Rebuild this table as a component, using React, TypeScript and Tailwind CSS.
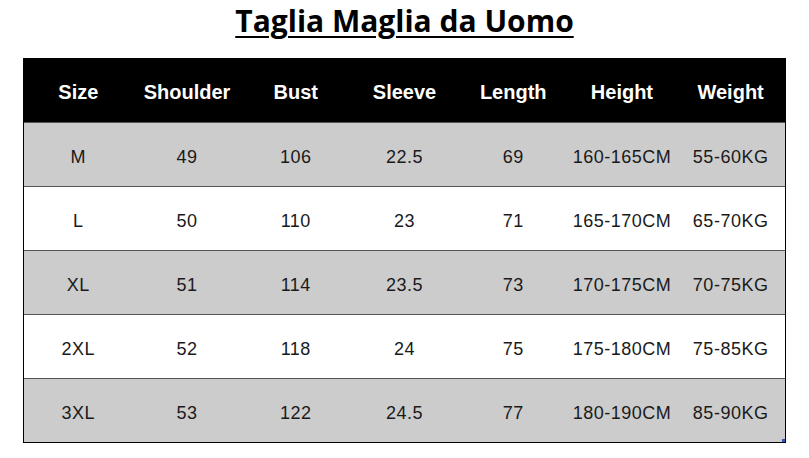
import React from "react";

const headers = ["Size", "Shoulder", "Bust", "Sleeve", "Length", "Height", "Weight"];
const rows = [
  ["M", "49", "106", "22.5", "69", "160-165CM", "55-60KG"],
  ["L", "50", "110", "23", "71", "165-170CM", "65-70KG"],
  ["XL", "51", "114", "23.5", "73", "170-175CM", "70-75KG"],
  ["2XL", "52", "118", "24", "75", "175-180CM", "75-85KG"],
  ["3XL", "53", "122", "24.5", "77", "180-190CM", "85-90KG"],
];

export default function App() {
  return (
    <div className="w-[809px] h-[458px] bg-white overflow-hidden">
      <div className="h-[58px] flex justify-center">
        <h1 className="mt-[2px] text-[30px] leading-[38px] font-bold text-black underline underline-offset-[4px] decoration-[2px] [font-family:'Open_Sans',sans-serif]">
          Taglia Maglia da Uomo
        </h1>
      </div>
      <div className="relative ml-[23px] w-[763px] border border-black [font-family:'Liberation_Sans',Arial,sans-serif]">
        <div className="grid grid-cols-7 h-[63px] bg-black text-white text-[20px] font-bold">
          {headers.map((h) => (
            <div key={h} className="flex items-center justify-center pt-[2px]">{h}</div>
          ))}
        </div>
        {rows.map((r, i) => (
          <div
            key={r[0]}
            className={`grid grid-cols-7 h-[64px] border-t border-[#555555] text-[18px] tracking-[0.5px] text-[#1a1a1a] ${i % 2 === 0 ? "bg-[#cccccc]" : "bg-white"}`}
          >
            {r.map((c, j) => (
              <div key={j} className="flex items-center justify-center pt-[5px]">{c}</div>
            ))}
          </div>
        ))}
        <div className="absolute right-0 bottom-0 w-[3px] h-[3px] bg-[#3355bb]" />
      </div>
    </div>
  );
}
